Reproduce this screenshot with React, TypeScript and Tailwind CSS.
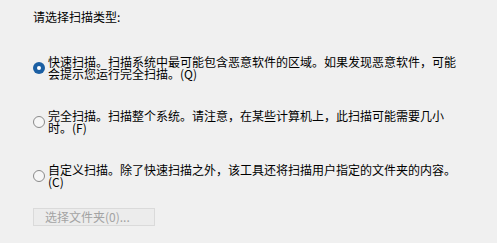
import type { ReactNode } from 'react'

const font = { fontFamily: '"Noto Sans CJK SC", "Microsoft YaHei", sans-serif' }

function Radio({ checked }: { checked?: boolean }) {
  if (checked) {
    return (
      <span className="flex-shrink-0 w-[12px] h-[12px] rounded-full bg-[#1b5fa3] flex items-center justify-center">
        <span className="w-[4px] h-[4px] rounded-full bg-white" />
      </span>
    )
  }
  return <span className="flex-shrink-0 w-[12px] h-[12px] rounded-full border border-[#8a8a8a] bg-[#f6f6f6]" />
}

function Option({ checked, children }: { checked?: boolean; children: ReactNode }) {
  return (
    <div className="flex items-center gap-[3px]">
      <Radio checked={checked} />
      <p className="text-[12px] leading-[12px] text-black whitespace-nowrap">{children}</p>
    </div>
  )
}

export default function App() {
  return (
    <div className="w-[497px] h-[243px] bg-[#f0f0f0] pl-[33px] pt-[10px] overflow-hidden" style={font}>
      <p className="text-[12px] leading-[14px] text-black">请选择扫描类型:</p>

      <div className="mt-[32px] flex flex-col gap-[30px]">
        <Option checked>
          快速扫描。扫描系统中最可能包含恶意软件的区域。如果发现恶意软件，可能
          <br />
          会提示您运行完全扫描。(Q)
        </Option>
        <Option>
          完全扫描。扫描整个系统。请注意，在某些计算机上，此扫描可能需要几小
          <br />
          时。(F)
        </Option>
        <Option>
          自定义扫描。除了快速扫描之外，该工具还将扫描用户指定的文件夹的内容。
          <br />
          (C)
        </Option>
      </div>

      <button
        disabled
        className="mt-[20px] w-[122px] h-[18px] border border-[#dadada] bg-[#ececec] text-left pl-[11px] text-[12px] leading-[16px] text-[#a3a3a3]"
      >
        选择文件夹(0)...
      </button>
    </div>
  )
}
